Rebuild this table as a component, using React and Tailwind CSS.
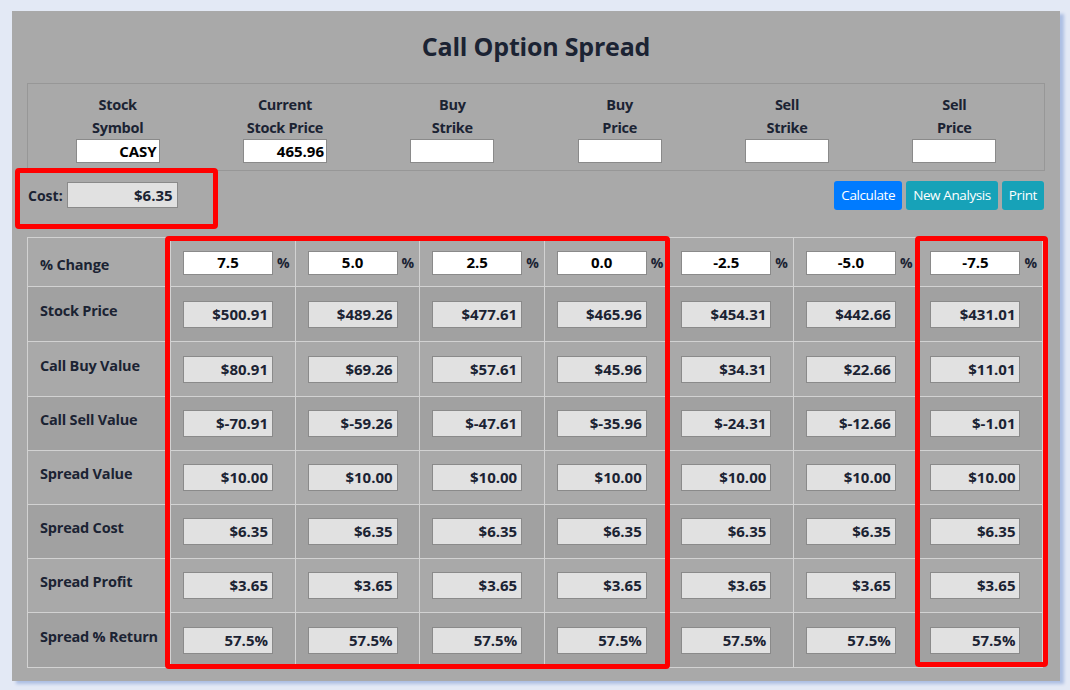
import React from 'react';

const pct = ['7.5', '5.0', '2.5', '0.0', '-2.5', '-5.0', '-7.5'];

const rows = [
  { label: 'Stock Price', values: ['$500.91', '$489.26', '$477.61', '$465.96', '$454.31', '$442.66', '$431.01'] },
  { label: 'Call Buy Value', values: ['$80.91', '$69.26', '$57.61', '$45.96', '$34.31', '$22.66', '$11.01'] },
  { label: 'Call Sell Value', values: ['$-70.91', '$-59.26', '$-47.61', '$-35.96', '$-24.31', '$-12.66', '$-1.01'] },
  { label: 'Spread Value', values: Array(7).fill('$10.00') },
  { label: 'Spread Cost', values: Array(7).fill('$6.35') },
  { label: 'Spread Profit', values: Array(7).fill('$3.65') },
  { label: 'Spread % Return', values: Array(7).fill('57.5%') },
];

const fields = [
  ['Stock', 'Symbol', 'CASY'],
  ['Current', 'Stock Price', '465.96'],
  ['Buy', 'Strike', ''],
  ['Buy', 'Price', ''],
  ['Sell', 'Strike', ''],
  ['Sell', 'Price', ''],
];

function ReadBox({ value }) {
  return (
    <div className="h-[27px] w-[90px] bg-[#e1e1e1] border border-[#8a8a8a] flex items-center justify-end pr-[4px] text-[15px] font-bold text-[#1b2333]">
      {value}
    </div>
  );
}

export default function App() {
  return (
    <div
      className="w-[1070px] h-[690px] bg-[#e3e9f5] pl-[12px] pt-[11px] text-[#1b2333]"
      style={{ fontFamily: '"Open Sans", "Noto Sans", sans-serif' }}
    >
      <div className="w-[1048px] h-[670px] bg-[#a9a9a9] shadow-[4px_3px_3px_#adbfe3] px-[15px]">
        <div className="h-[72px] flex items-center justify-center">
          <h1 className="text-[25px] font-bold tracking-[-0.2px] pb-[1px]">Call Option Spread</h1>
        </div>

        <div className="border border-[#979797] h-[88px] grid grid-cols-6 pt-[9px] px-[6px]">
          {fields.map(([a, b, v], i) => (
            <div key={i} className="flex flex-col items-center">
              <div className="text-[14.5px] font-bold leading-[23px] tracking-[-0.3px]">{a}</div>
              <div className="text-[14.5px] font-bold leading-[23px] tracking-[-0.3px]">{b}</div>
              <div className="h-[24px] w-[84px] bg-white border border-[#8a8a8a] flex items-center justify-end pr-[2px] text-[15px] font-bold text-black">
                {v}
              </div>
            </div>
          ))}
        </div>

        <div className="relative h-[66px] flex items-start justify-between pt-[10px]">
          <div className="flex items-center gap-[4px] pl-[1px] pt-[1px]">
            <span className="text-[14px] font-bold">Cost:</span>
            <div className="h-[26px] w-[111px] bg-[#e1e1e1] border border-[#8a8a8a] flex items-center justify-end pr-[4px] text-[15px] font-bold">
              $6.35
            </div>
          </div>
          <div className="flex gap-[4px] pr-[1px]">
            <button className="h-[29px] px-[7px] rounded-[3px] bg-[#007bff] text-white text-[13.5px] tracking-[-0.4px]">Calculate</button>
            <button className="h-[29px] px-[7px] rounded-[3px] bg-[#17a2b8] text-white text-[13.5px] tracking-[-0.4px]">New Analysis</button>
            <button className="h-[29px] px-[7px] rounded-[3px] bg-[#17a2b8] text-white text-[13.5px] tracking-[-0.4px]">Print</button>
          </div>
          <div className="absolute left-[-12px] top-[-3px] w-[203px] h-[61px] border-[5px] border-[#ff0000] rounded-[4px]" />
        </div>

        <div className="relative w-[1016px]">
          <div className="border border-[#d2d2d2]">
            <div className="flex h-[48px] bg-[#a9a9a9]">
              <div className="w-[143px] shrink-0 border-r border-[#d2d2d2] flex items-center pl-[12px] text-[14.5px] font-bold tracking-[-0.2px] pt-[5px]">
                % Change
              </div>
              {pct.map((p, i) => (
                <div key={i} className="flex-1 border-r border-[#d2d2d2] last:border-r-0 flex items-center pl-[12px] gap-[4px] pt-[1px]">
                  <div className="h-[24px] w-[90px] bg-white border border-[#8a8a8a] flex items-center justify-center text-[15px] font-bold text-black">
                    {p}
                  </div>
                  <span className="text-[14px] font-bold">%</span>
                </div>
              ))}
            </div>
            {rows.map((r, ri) => (
              <div
                key={r.label}
                className={`flex border-t border-[#d2d2d2] ${ri % 2 === 0 ? 'bg-[#a1a1a1]' : 'bg-[#a9a9a9]'} ${ri === 0 || ri === 1 || ri === 6 ? 'h-[55px]' : 'h-[54px]'}`}
              >
                <div className="w-[143px] shrink-0 border-r border-[#d2d2d2] flex items-center pl-[12px] pb-[7px] text-[14.5px] font-bold tracking-[-0.2px]">
                  {r.label}
                </div>
                {r.values.map((v, i) => (
                  <div key={i} className="flex-1 border-r border-[#d2d2d2] last:border-r-0 flex items-center pl-[12px]">
                    <ReadBox value={v} />
                  </div>
                ))}
              </div>
            ))}
          </div>
          <div className="absolute left-[138px] top-[-1px] w-[505px] h-[433px] border-[5px] border-[#ff0000] rounded-[4px] pointer-events-none" />
          <div className="absolute left-[888px] top-[-1px] w-[133px] h-[431px] border-[5px] border-[#ff0000] rounded-[4px] pointer-events-none" />
        </div>
      </div>
    </div>
  );
}
